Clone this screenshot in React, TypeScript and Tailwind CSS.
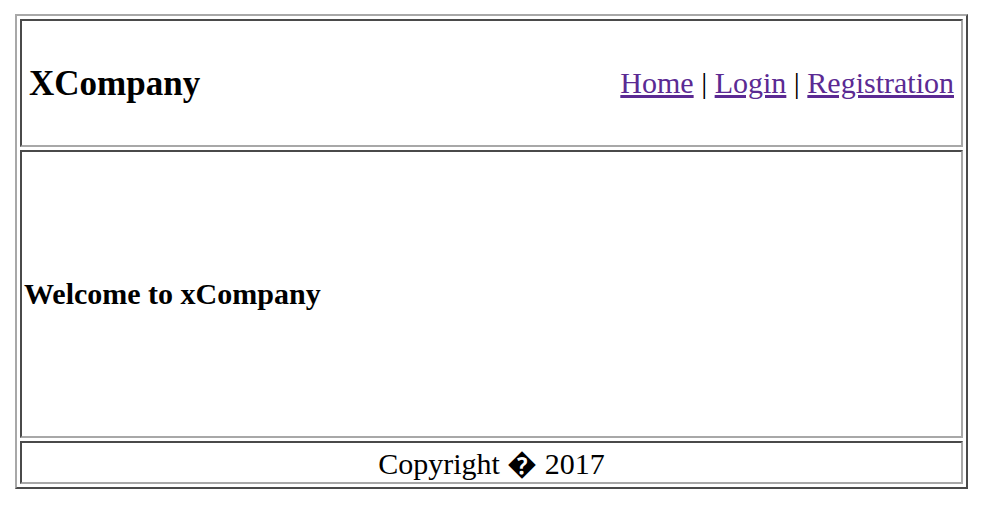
import React from "react";

export default function App() {
  const cell =
    "border-2 border-t-[#4a4a4a] border-l-[#4a4a4a] border-b-[#a8a8a8] border-r-[#a8a8a8]";
  return (
    <div
      className="bg-white min-h-[520px] pt-[14px] pl-[15px] text-black"
      style={{ fontFamily: '"Liberation Serif", "Times New Roman", serif' }}
    >
      <div className="w-[953px] border-2 border-t-[#a8a8a8] border-l-[#a8a8a8] border-b-[#4a4a4a] border-r-[#4a4a4a] p-[3px] flex flex-col gap-[3px]">
        <div className={`${cell} h-[128px] flex items-center justify-between pl-[7px] pr-[7px]`}>
          <div className="text-[35px] font-bold leading-none">XCompany</div>
          <div className="text-[30px] leading-none">
            <a href="#" className="text-[#5b2a93] underline">Home</a>
            {" | "}
            <a href="#" className="text-[#5b2a93] underline">Login</a>
            {" | "}
            <a href="#" className="text-[#5b2a93] underline">Registration</a>
          </div>
        </div>
        <div className={`${cell} h-[288px] flex items-center pl-[2px]`}>
          <div className="text-[30px] font-bold leading-none">Welcome to xCompany</div>
        </div>
        <div className={`${cell} h-[43px] flex items-center justify-center pt-[3px]`}>
          <div className="text-[30px] leading-none">
            Copyright {"\uFFFD"} 2017
          </div>
        </div>
      </div>
    </div>
  );
}
